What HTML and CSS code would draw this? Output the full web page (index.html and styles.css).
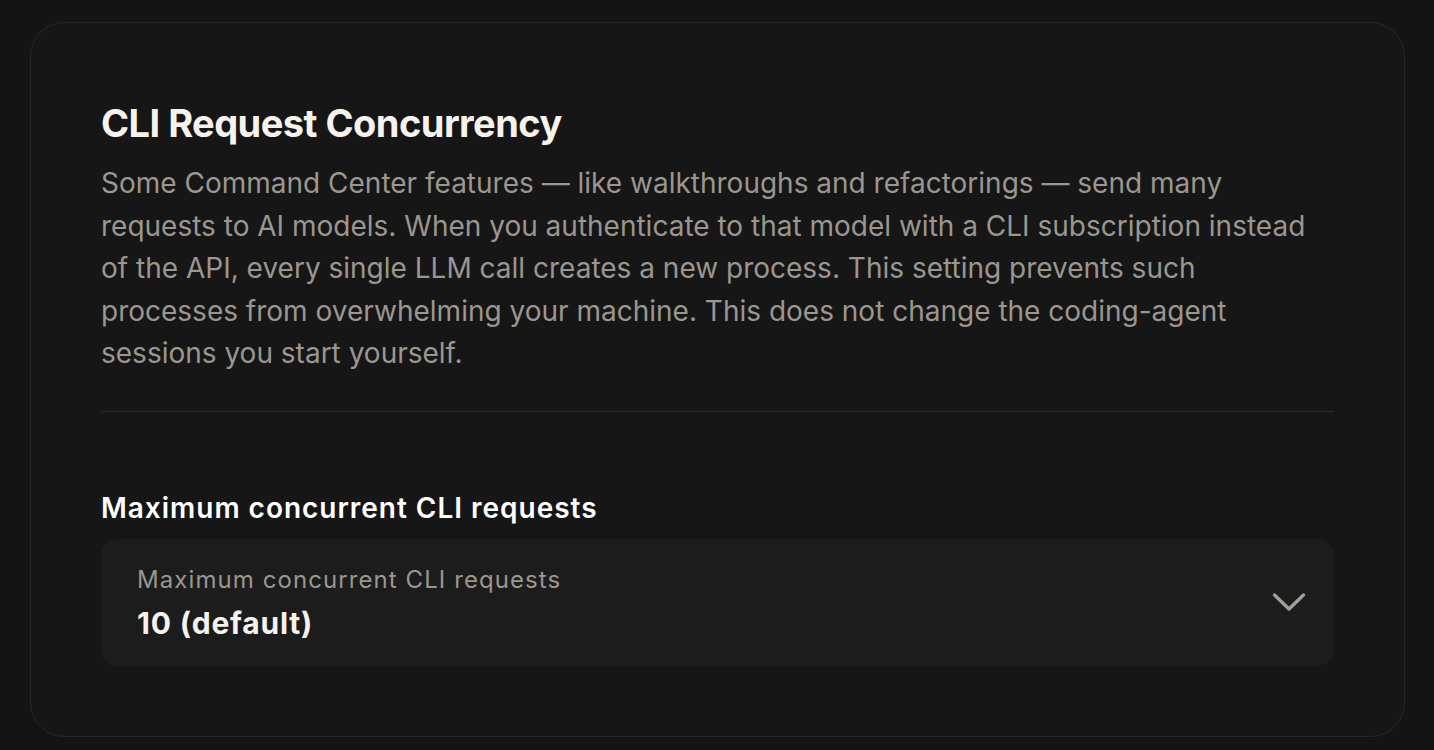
FILE: index.html
```html
<!DOCTYPE html>
<html lang="en">
<head>
<meta charset="utf-8">
<title>CLI Request Concurrency</title>
<link rel="stylesheet" href="styles.css">
</head>
<body>
  <main class="page">
    <section class="card">
      <h1 class="card-title">CLI Request Concurrency</h1>
      <p class="card-desc">Some Command Center features — like walkthroughs and refactorings — send many requests to AI models. When you authenticate to that model with a CLI subscription instead of the API, every single LLM call creates a new process. This setting prevents such processes from overwhelming your machine. This does not change the coding-agent sessions you start yourself.</p>
      <hr class="divider">
      <div class="field">
        <label class="field-label" for="max-cli">Maximum concurrent CLI requests</label>
        <div class="select" id="max-cli" role="button" tabindex="0">
          <div class="select-text">
            <span class="select-caption">Maximum concurrent CLI requests</span>
            <span class="select-value">10 (default)</span>
          </div>
          <svg class="chevron" width="34" height="20" viewBox="0 0 34 20" aria-hidden="true">
            <polyline points="2.5,3 17,17 31.5,3" fill="none" stroke="currentColor" stroke-width="3.4" stroke-linecap="round" stroke-linejoin="round"/>
          </svg>
        </div>
      </div>
    </section>
  </main>
</body>
</html>
```
FILE: styles.css
```css
* {
  box-sizing: border-box;
}

html,
body {
  margin: 0;
  height: 100%;
  background: #141414;
}

body {
  font-family: Inter, "Noto Sans", "Liberation Sans", sans-serif;
  -webkit-font-smoothing: antialiased;
}

.page {
  padding: 22px 29px 0 30px;
}

.card {
  border: 1px solid #262626;
  border-radius: 34px;
  background: #161616;
  padding: 77px 70px 70px 70px;
}

.card-title {
  margin: 0;
  font-size: 38px;
  line-height: 46px;
  font-weight: 700;
  letter-spacing: -0.014em;
  color: #f6f2ec;
}

.card-desc {
  margin: 16px 0 0;
  font-size: 28px;
  line-height: 42.6px;
  font-weight: 400;
  color: #9b968f;
}

.divider {
  margin: 36px 0 0;
  border: 0;
  height: 1px;
  background: #2a2a2a;
}

.field {
  margin-top: 78px;
  display: flex;
  flex-direction: column;
  gap: 13px;
}

.field-label {
  font-size: 28px;
  line-height: 36px;
  font-weight: 600;
  letter-spacing: 0.035em;
  color: #ffffff;
}

.select {
  display: flex;
  align-items: center;
  justify-content: space-between;
  height: 127px;
  padding: 0 28px 0 36px;
  border-radius: 16px;
  background: #1c1c1c;
  cursor: pointer;
}

.select-text {
  display: flex;
  flex-direction: column;
  gap: 10px;
}

.select-caption {
  font-size: 24px;
  line-height: 31px;
  letter-spacing: 0.045em;
  color: #9b968f;
}

.select-value {
  font-size: 30px;
  line-height: 36px;
  font-weight: 700;
  letter-spacing: 0.027em;
  color: #f6f2ec;
}

.chevron {
  color: #a39e98;
  flex: none;
}
```
